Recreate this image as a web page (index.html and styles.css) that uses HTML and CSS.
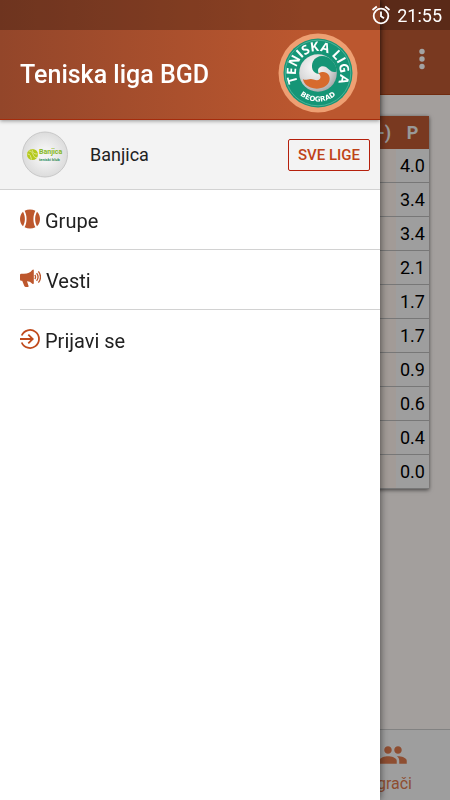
FILE: index.html
```html
<!DOCTYPE html>
<html lang="sr">
  <head>
    <meta charset="UTF-8" />
    <meta name="viewport" content="width=device-width, initial-scale=1.0" />
    <title>Teniska liga BGD</title>
    <link rel="stylesheet" href="styles.css">
  </head>
  <body>
    <div class="page">
      <header class="app-bar">
        <button class="more-btn" aria-label="Meni">
          <svg width="8" height="22" viewBox="0 0 8 22" fill="currentColor">
            <circle cx="4" cy="3.500" r="2.700" />
            <circle cx="4" cy="11" r="2.700" />
            <circle cx="4" cy="18.500" r="2.700" />
          </svg>
        </button>
      </header>
      <main class="content">
        <table class="standings">
          <thead>
            <tr><th>(+/-)</th><th>P</th></tr>
          </thead>
          <tbody>
            <tr><td></td><td>4.0</td></tr>
            <tr><td></td><td>3.4</td></tr>
            <tr><td></td><td>3.4</td></tr>
            <tr><td></td><td>2.1</td></tr>
            <tr><td></td><td>1.7</td></tr>
            <tr><td></td><td>1.7</td></tr>
            <tr><td></td><td>0.9</td></tr>
            <tr><td></td><td>0.6</td></tr>
            <tr><td></td><td>0.4</td></tr>
            <tr><td></td><td>0.0</td></tr>
          </tbody>
        </table>
      </main>
      <nav class="tab-bar">
        <a class="tab" href="#igraci">
          <svg width="30" height="30" viewBox="0 0 24 24" fill="currentColor">
            <path d="M16 11c1.660 0 2.990-1.340 2.990-3S17.660 5 16 5s-3 1.340-3 3 1.340 3 3 3zm-8 0c1.660 0 2.990-1.340 2.990-3S9.660 5 8 5 5 6.340 5 8s1.340 3 3 3zm0 2c-2.330 0-7 1.170-7 3.500V19h14v-2.500C15 14.170 10.330 13 8 13zm8 0c-.29 0-.62.02-.97.05 1.160.84 1.970 1.970 1.970 3.450V19h6v-2.500c0-2.330-4.670-3.500-7-3.500z" />
          </svg>
          Igrači
        </a>
      </nav>
    </div>

    <div class="overlay"></div>

    <aside class="drawer">
      <div class="drawer-header">
        <h1 class="drawer-title">Teniska liga BGD</h1>
        <svg class="league-logo" viewBox="0 0 80 80">
          <defs>
            <radialGradient id="ballShade" cx="40%" cy="35%" r="70%">
              <stop offset="0" stop-color="#fafafa" />
              <stop offset="0.6" stop-color="#d9d9da" />
              <stop offset="1" stop-color="#a2a5a6" />
            </radialGradient>
            <path id="topArc" d="M24.400 55.600A22 22 0 1 1 55.600 55.600" />
            <path id="bottomArc" d="M11.500 40A28.500 28.500 0 0 0 68.500 40" />
          </defs>
          <circle cx="40" cy="40" r="39.500" fill="#ee9f72" />
          <circle cx="40" cy="40" r="34.500" fill="#159576" />
          <circle cx="40" cy="40" r="32.800" fill="none" stroke="#5ab99f" stroke-width="0.800" />
          <circle cx="40" cy="40" r="18.800" fill="url(#ballShade)" />
          <path fill="#159576" d="M58.500 38.500C55.500 40 52.500 38 51 36.500C48.500 33.500 45.500 32.500 43 33.500C39.500 35 39.500 38 41 41C34.500 40.500 32.500 34 35 28.500C38.500 21.500 48.500 21 54.500 28C57.500 31.500 58.800 35 58.500 38.500z" />
          <path fill="#d76a2d" d="M25 46C28 48.500 31 44.500 35.500 46.500C39.500 48 42.500 47 42.500 44C42.500 42.500 41.500 41 40.500 40.500C47 36.500 53 41.500 51.500 47.500C50 54.500 40 57.500 32.500 54.500C28.500 53 25.500 50 25 46z" />
          <text class="logo-name"><textPath href="#topArc" startOffset="50%">TENISKA LIGA</textPath></text>
          <text class="logo-city"><textPath href="#bottomArc" startOffset="50%">BEOGRAD</textPath></text>
        </svg>
      </div>
      <div class="club">
        <svg class="club-logo" viewBox="0 0 48 48">
          <defs>
            <radialGradient id="clubShade">
              <stop offset="0.300" stop-color="#f3f3f3" />
              <stop offset="1" stop-color="#dcdcdc" />
            </radialGradient>
          </defs>
          <circle cx="25" cy="23.500" r="22.500" fill="url(#clubShade)" stroke="#c8c8c8" />
          <circle cx="12.500" cy="23.500" r="5.500" fill="#b5c91c" />
          <path d="M8.500 20c4 0 4 2.500 5 4.500s2 2.500 4 2M7.500 23c3 0 3 2 4 5.500M12 18.500c1 3.500 2 4.500 5.500 4.500" fill="none" stroke="#eef2c0" stroke-width="0.700" />
          <text class="club-logo-name" x="19" y="23">Banjica</text>
          <text class="club-logo-sub" x="19" y="30">teniski klub</text>
        </svg>
        <span class="club-name">Banjica</span>
        <button class="leagues-btn">SVE LIGE</button>
      </div>
      <nav>
        <ul class="menu">
          <li class="menu-item">
            <a class="menu-link" href="#grupe">
              <svg width="20" height="20" viewBox="0 0 20 20">
                <path fill="#bd572d" d="M4.600 1.700C8 0 12 0 15.400 1.700C12.800 6.500 12.800 13.500 15.400 18.300C12 20 8 20 4.600 18.300C7.200 13.500 7.200 6.500 4.600 1.700z" />
                <path fill="#bd572d" d="M3 2.800C5.500 7 5.500 13 3 17.200C-1 13.500 -1 6.500 3 2.800zM17 2.800C14.500 7 14.500 13 17 17.200C21 13.500 21 6.500 17 2.800z" />
              </svg>
              Grupe
            </a>
          </li>
          <li class="menu-item">
            <a class="menu-link" href="#vesti">
              <svg width="21" height="20" viewBox="0 0 21 20">
                <path fill="#bd572d" d="M0 6Q0 4.800 1.200 4.800H4C8 4.800 10.500 3.200 12 1.200Q13.800 -.3 13.800 1.500V14Q13.800 15.800 12 14.500C10.500 13 9 12.300 7 12.200L8.500 16.700Q8.800 18 7.500 18H6Q4.800 18 4.300 17L2.200 11.800H1.200Q0 11.800 0 10.500z" />
                <path d="M14.800 6q1.600 2 0 4M16.600 4.200q3 3.800 0 7.600M18.400 2.400q4.200 5.600 0 11.200" fill="none" stroke="#bd572d" stroke-width="1.300" />
              </svg>
              Vesti
            </a>
          </li>
          <li class="menu-item">
            <a class="menu-link" href="#prijava">
              <svg width="20" height="20" viewBox="0 0 20 20" fill="none" stroke="#c04a1c" stroke-width="1.800">
                <path d="M1.700 6.500A9 9 0 1 1 1.700 13.500M0 10H12.500M8.300 5.700L12.700 10L8.300 14.300" />
              </svg>
              Prijavi se
            </a>
          </li>
        </ul>
      </nav>
    </aside>

    <div class="status-bar">
      <svg width="20" height="20" viewBox="0 0 20 20" fill="none" stroke="#fff" stroke-width="1.800">
        <circle cx="10" cy="11" r="7.300" />
        <path d="M10 6.500V11.300L13 13.300M1.500 5L5.800 1.500M18.500 5L14.200 1.500" />
      </svg>
      <span>21:55</span>
    </div>
  </body>
</html>
```

FILE: styles.css
```css
* {
  margin: 0;
  padding: 0;
  box-sizing: border-box;
}
body {
  font-family: Roboto, "Open Sans", sans-serif;
  color: #212121;
}
.page {
  min-height: 100vh;
  display: flex;
  flex-direction: column;
  background: #fff9f6;
}
.app-bar {
  display: flex;
  justify-content: flex-end;
  align-items: center;
  height: 95px;
  padding: 30px 20px 6px;
  background: #be5932;
  border-bottom: 1px solid #b04418;
}
.more-btn {
  display: flex;
  padding: 4px;
  border: none;
  background: none;
  color: #fff;
  cursor: pointer;
}
.content {
  flex: 1;
  padding: 21px 21px 20px;
}
.standings {
  width: 100%;
  border-spacing: 0;
  background: #f8f8f8;
  box-shadow: 0 1px 4px rgba(0, 0, 0, 0.6);
  font-size: 18px;
}
.standings th {
  height: 33px;
  background: #be5932;
  color: #eee;
  font-weight: 700;
  text-align: right;
  padding-right: 5px;
}
.standings th:last-child {
  width: 33px;
  padding-right: 0;
  text-align: center;
}
.standings td {
  height: 34px;
  border-bottom: 1px solid #bbb;
  background: #fdf3ec;
  color: #000;
}
.standings td:last-child {
  background: #f8f8f8;
  text-align: center;
}
.tab-bar {
  display: flex;
  justify-content: flex-end;
  height: 71px;
  padding-right: 38px;
  background: #f8f8f8;
  border-top: 1px solid #ccc;
}
.tab {
  display: flex;
  flex-direction: column;
  align-items: flex-end;
  padding-top: 10px;
  color: #de7a4e;
  font-size: 16px;
  line-height: 28px;
  text-decoration: none;
}
.tab svg {
  margin-right: 4px;
}
.overlay {
  position: fixed;
  inset: 0;
  background: rgba(0, 0, 0, 0.36);
}
.drawer {
  position: fixed;
  top: 0;
  bottom: 0;
  left: 0;
  width: calc(100% - 70px);
  background: #fff;
  box-shadow: 0 0 8px rgba(0, 0, 0, 0.6);
}
.drawer-header {
  position: relative;
  display: flex;
  align-items: center;
  justify-content: space-between;
  height: 120px;
  padding: 30px 22px 4px 20px;
  background: linear-gradient(90deg, #93462a, #bb572f 80%);
  border-bottom: 1px solid #a52c0c;
  box-shadow: 0 1px 4px rgba(0, 0, 0, 0.4);
}
.drawer-title {
  padding-top: 4px;
  color: #fff;
  font-size: 25px;
  font-weight: 500;
}
.league-logo {
  width: 80px;
  height: 80px;
}
.logo-name,
.logo-city {
  fill: #fff;
  font-weight: 700;
  text-anchor: middle;
}
.logo-name {
  font-family: "Open Sans", sans-serif;
  font-size: 13px;
}
.logo-city {
  font-family: "DejaVu Sans", sans-serif;
  font-size: 7px;
}
.club {
  display: flex;
  align-items: center;
  height: 70px;
  padding: 0 10px 0 20px;
  background: #f3f3f3;
  border-bottom: 1px solid #d2d2d2;
}
.club-logo {
  width: 48px;
  height: 48px;
}
.club-logo-name {
  fill: #86b81b;
  font-size: 7px;
  font-weight: 700;
}
.club-logo-sub {
  fill: #2f8a5b;
  font-size: 4px;
  font-weight: 700;
}
.club-name {
  flex: 1;
  padding-left: 22px;
  font-size: 18px;
}
.leagues-btn {
  height: 32px;
  padding: 0 9px;
  border: 1px solid #b5200c;
  border-radius: 2px;
  background: none;
  color: #bf4218;
  font-family: inherit;
  font-size: 15px;
  font-weight: 500;
  cursor: pointer;
}
.menu {
  list-style: none;
  padding-left: 20px;
}
.menu-item {
  height: 60px;
  border-bottom: 1px solid #d2d2d2;
}
.menu-item:last-child {
  border-bottom: none;
}
.menu-link {
  display: flex;
  align-items: center;
  gap: 5px;
  height: 100%;
  padding-top: 2px;
  color: inherit;
  font-size: 20px;
  text-decoration: none;
}
.menu-link svg {
  margin-bottom: 4px;
}
.status-bar {
  position: fixed;
  top: 0;
  left: 0;
  right: 0;
  display: flex;
  align-items: center;
  justify-content: flex-end;
  gap: 6px;
  height: 30px;
  padding-right: 8px;
  background: rgba(0, 0, 0, 0.25);
  color: #fff;
  font-size: 18px;
}
```
